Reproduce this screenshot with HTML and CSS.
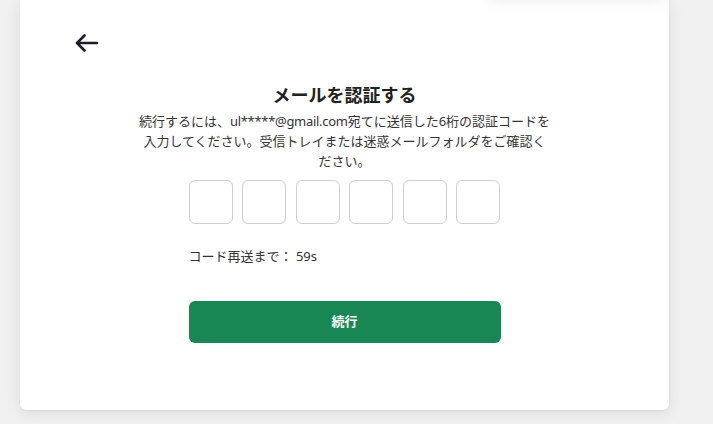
FILE: index.html
```html
<!DOCTYPE html>
<html lang="ja">
<head>
<meta charset="utf-8">
<link rel="stylesheet" href="styles.css">
</head>
<body>
<div class="page">
  <div class="top-shadow"></div>
  <div class="card">
    <a class="back" href="#" aria-label="戻る">
      <svg width="24" height="18" viewBox="0 0 24 18"><path d="M2 9H22M9.5 1.5L2 9L9.5 16.5" fill="none" stroke="#1c1c2b" stroke-width="2.6" stroke-linecap="round" stroke-linejoin="round"/></svg>
    </a>
    <div class="content">
      <h1 class="title">メールを認証する</h1>
      <p class="desc">続行するには、<span class="email">ul*****@gmail.com</span>宛てに送信した6桁の認証コードを入力してください。受信トレイまたは迷惑メールフォルダをご確認ください。</p>
      <div class="column">
        <div class="codes">
          <input class="code" maxlength="1">
          <input class="code" maxlength="1">
          <input class="code" maxlength="1">
          <input class="code" maxlength="1">
          <input class="code" maxlength="1">
          <input class="code" maxlength="1">
        </div>
        <div class="resend">コード再送まで： 59s</div>
        <button class="submit">続行</button>
      </div>
    </div>
  </div>
</div>
</body>
</html>
```
FILE: styles.css
```css
* { box-sizing: border-box; }
html, body { margin: 0; padding: 0; }
body {
  background: #f0f0f0;
  font-family: "Noto Sans", "Noto Sans CJK JP", sans-serif;
  color: #222;
  width: 713px;
  height: 424px;
  overflow: hidden;
}
.page {
  position: relative;
  padding: 0 44px 0 20px;
}
.top-shadow {
  position: absolute;
  left: 490px;
  top: -40px;
  width: 173px;
  height: 40px;
  background: #fff;
  box-shadow: 0 2px 14px rgba(0,0,0,0.07);
}
.card {
  background: #fff;
  width: 649px;
  border-radius: 0 0 6px 6px;
  box-shadow: 0 3px 16px rgba(0,0,0,0.08), 0 1px 2px rgba(0,0,0,0.06);
  padding: 34px 0 67px;
}
.back {
  display: block;
  width: 24px;
  height: 18px;
  margin-left: 55px;
}
.back svg { display: block; }
.content {
  display: flex;
  flex-direction: column;
  align-items: center;
}
.title {
  margin: 30px 0 0;
  font-size: 18px;
  line-height: 26px;
  font-weight: 700;
  color: #222;
}
.desc {
  margin: 3px 0 0;
  width: 415px;
  font-size: 13px;
  line-height: 20px;
  text-align: center;
  color: #333;
}
.email {
  letter-spacing: -0.3px;
}
.column {
  width: 312px;
  margin-top: 9px;
  display: flex;
  flex-direction: column;
}
.codes {
  display: flex;
  justify-content: space-between;
}
.code {
  width: 44px;
  height: 44px;
  border: 1px solid #cfcfcf;
  border-radius: 6px;
  background: #fff;
  padding: 0;
  font-size: 18px;
  text-align: center;
}
.resend {
  margin-top: 22px;
  font-size: 13px;
  line-height: 20px;
  color: #333;
}
.submit {
  margin-top: 35px;
  height: 42px;
  padding: 0 0 4px;
  border: none;
  border-radius: 6px;
  background: #198754;
  color: #fff;
  font-family: inherit;
  font-size: 13px;
  font-weight: 700;
}
```
